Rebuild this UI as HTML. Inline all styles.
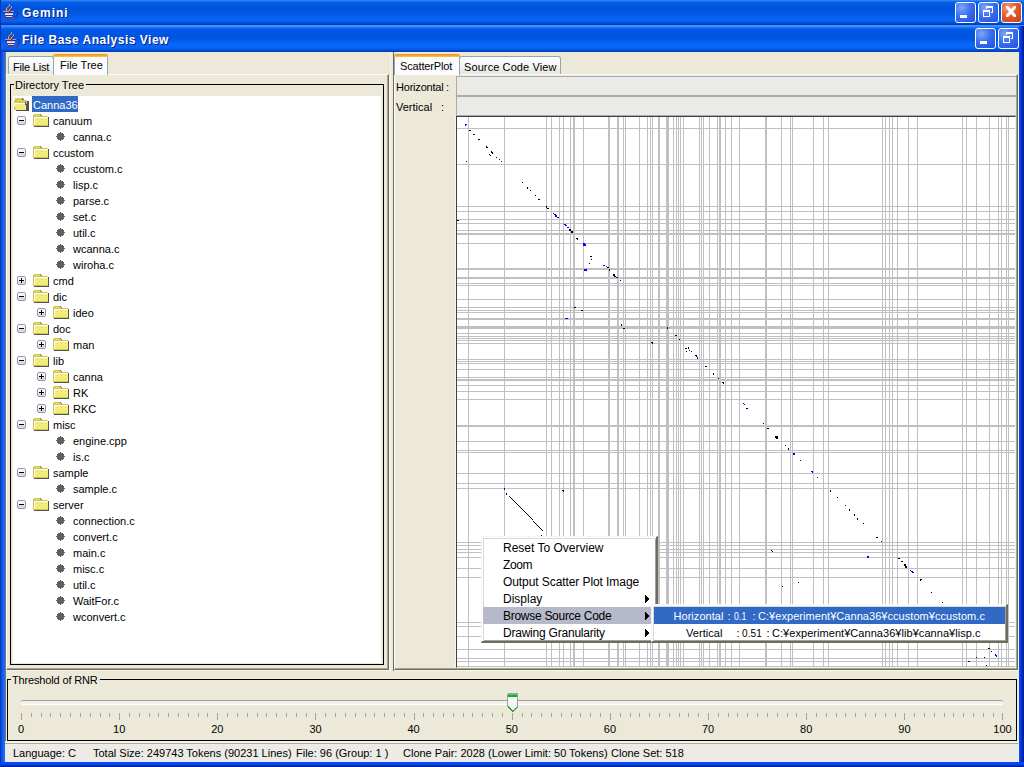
<!DOCTYPE html>
<html><head><meta charset="utf-8"><style>
*{margin:0;padding:0;box-sizing:border-box}
html,body{width:1024px;height:767px;overflow:hidden;background:#ECE9D8;font-family:"Liberation Sans",sans-serif;font-size:11px;color:#000}
.a{position:absolute}
.t{position:absolute;white-space:pre;line-height:1}
#tb1{left:0;top:0;width:1024px;height:26px;background:linear-gradient(#3C8EF5 0px,#0A60EA 2px,#0058E4 4px,#0052DC 9px,#0058E6 14px,#0864F4 19px,#0662F2 21px,#0048D0 23.5px,#0038B4 25px,#3D90F8 25px,#3D90F8 26px)}
#frame{left:0;top:26px;width:1024px;height:741px;background:#0041D3}
#tb2{left:0;top:26px;width:1024px;height:26px;background:linear-gradient(#4A98FA 0px,#1068F0 2px,#0058E6 4px,#0054DE 10px,#0058E8 14px,#0A66F8 18px,#0864F4 22px,#0050D8 24px,#003CB0 26px)}
#lb{left:0;top:52px;width:5px;height:715px;background:linear-gradient(90deg,#0020C8 0px,#0050EA 1.5px,#1A6CF8 4px,#1A6CF8 5px)}
#rb{left:1019px;top:26px;width:5px;height:741px;background:linear-gradient(90deg,#0448F8 0px,#0448F8 1px,#0234C8 2.5px,#00168A 5px)}
#bb{left:0;top:762px;width:1024px;height:5px;background:linear-gradient(#0448F8 0px,#0448F8 2px,#0234C8 3.5px,#00168A 5px)}
#content{left:5px;top:52px;width:1014px;height:710px;background:#ECE9D8}
.ttl{color:#fff;font-weight:bold;font-size:13px;text-shadow:1px 1px 0 #0A1E80}
.btn{position:absolute;width:21px;height:21px;border:1px solid #fff;border-radius:3px;background:radial-gradient(circle at 30% 25%,#7FA6FA 0,#3A6FF0 45%,#2350D8 100%)}
.cls{background:radial-gradient(circle at 30% 25%,#F09A7F 0,#E45A2C 45%,#C8401C 100%)}
.tab{position:absolute;border:1px solid #94A6B4;border-bottom:none;border-radius:3px 3px 0 0;background:linear-gradient(#FFFFFF,#F3F3EF 60%,#E6E5DE)}
.tabsel{position:absolute;border:1px solid #94A6B4;border-bottom:none;border-top:none;border-radius:3px 3px 0 0;background:#FCFCFE}
.tabsel:before{content:"";position:absolute;left:-1px;right:-1px;top:0;height:3px;background:linear-gradient(#E68B2C,#FFC73C);border-radius:3px 3px 0 0}
.pane{position:absolute;background:#ECE9D8;border-left:1px solid #FFFFFF;border-top:1px solid #FCFCFE;border-right:1px solid #6E6C5E;border-bottom:1px solid #6E6C5E;box-shadow:inset -1px -1px 0 #A8A490,1px 1px 0 #F7F5E8}
.tree{font-size:11px}
.pm{font-size:12px}
</style></head><body>
<div class="a" id="frame"></div><div class="a" id="tb1"></div><div class="a" id="tb2"></div><div class="a" id="lb"></div><div class="a" id="rb"></div><div class="a" id="bb"></div><div class="a" id="content"></div>
<div class="t ttl" style="left:22px;top:7px;font-size:12px;letter-spacing:1px">Gemini</div>
<div class="t ttl" style="left:22px;top:34px;font-size:12px;letter-spacing:0.5px">File Base Analysis View</div>
<div class="btn" style="left:955px;top:2px"></div>
<div class="btn" style="left:978px;top:2px"></div>
<div class="btn cls" style="left:1001px;top:2px"></div>
<div class="btn" style="left:975px;top:28px"></div>
<div class="btn" style="left:998px;top:28px"></div>
<svg class="a" style="left:2px;top:3px" width="18" height="18" viewBox="0 0 18 18" shape-rendering="crispEdges"><path d="M7 1h1v2H7v1H6v1H5v1H4V5h1V4h1V3h1zM4 6h1v2H4zM5 8h2v1H5zM9 3h1v2H9v1H8v2H7V6h1V5h1z" fill="#F09040"/><path d="M5 6h1v2H5zM6 7h1v1H6zM8 8h1v1H8z" fill="#C83828"/><path d="M1 8h4v1h4V8h3v1H1z" fill="#A898E8"/><path d="M1 9h11v1h-1v1H2v-1H1z" fill="#3E3070"/><path d="M3 10h8v1H3z" fill="#C0B8F8"/><path d="M3 11h8v1H3z" fill="#F0F0FF"/><path d="M3 12h8v1H3z" fill="#3E3070"/><path d="M4 13h6v1H4z" fill="#E0D8FF"/><path d="M4 14h6v1H4z" fill="#3E3070"/><path d="M13 8h2v1h1v3h-1v2h-1v1h-1v-2h1v-2h1V9h-2z" fill="#3E3070"/><path d="M0 15h2v1h11v-1h2v1h-1v1H2v-1H0z" fill="#52448A"/></svg>
<svg class="a" style="left:4px;top:31px" width="18" height="18" viewBox="0 0 18 18" shape-rendering="crispEdges"><path d="M7 1h1v2H7v1H6v1H5v1H4V5h1V4h1V3h1zM4 6h1v2H4zM5 8h2v1H5zM9 3h1v2H9v1H8v2H7V6h1V5h1z" fill="#F09040"/><path d="M5 6h1v2H5zM6 7h1v1H6zM8 8h1v1H8z" fill="#C83828"/><path d="M1 8h4v1h4V8h3v1H1z" fill="#A898E8"/><path d="M1 9h11v1h-1v1H2v-1H1z" fill="#3E3070"/><path d="M3 10h8v1H3z" fill="#C0B8F8"/><path d="M3 11h8v1H3z" fill="#F0F0FF"/><path d="M3 12h8v1H3z" fill="#3E3070"/><path d="M4 13h6v1H4z" fill="#E0D8FF"/><path d="M4 14h6v1H4z" fill="#3E3070"/><path d="M13 8h2v1h1v3h-1v2h-1v1h-1v-2h1v-2h1V9h-2z" fill="#3E3070"/><path d="M0 15h2v1h11v-1h2v1h-1v1H2v-1H0z" fill="#52448A"/></svg>
<div class="a" style="left:0;top:0;width:1px;height:767px;background:#0A34B8"></div>
<svg class="a" style="left:955px;top:2px" width="21" height="21" viewBox="0 0 21 21"><path d="M5 13h7v3h-7z" fill="#fff"/></svg>
<svg class="a" style="left:978px;top:2px" width="21" height="21" viewBox="0 0 21 21"><path d="M8 4h7v7h-2v-1h1v-4h-5v1h-1z" fill="#fff"/><path d="M5 8h7v7h-7zM6 10v4h5v-4z" fill="#fff"/></svg>
<svg class="a" style="left:1001px;top:2px" width="21" height="21" viewBox="0 0 21 21"><path d="M5 4h2l3 3l3 -3h2v2l-3 3.5l3 3.5v2h-2l-3 -3l-3 3h-2v-2l3 -3.5l-3 -3.5z" fill="#fff"/></svg>
<svg class="a" style="left:975px;top:28px" width="21" height="21" viewBox="0 0 21 21"><path d="M5 13h7v3h-7z" fill="#fff"/></svg>
<svg class="a" style="left:998px;top:28px" width="21" height="21" viewBox="0 0 21 21"><path d="M8 4h7v7h-2v-1h1v-4h-5v1h-1z" fill="#fff"/><path d="M5 8h7v7h-7zM6 10v4h5v-4z" fill="#fff"/></svg>
<div class="a" style="left:5px;top:52px;width:1px;height:691px;background:#7A7868"></div>
<div class="pane" style="left:6px;top:74px;width:383px;height:596px"></div>
<div class="tab" style="left:8px;top:56px;width:46px;height:18px"></div>
<div class="t" style="left:13px;top:62px;letter-spacing:-0.2px">File List</div>
<div class="tabsel" style="left:53px;top:54px;width:55px;height:21px"></div>
<div class="t" style="left:60px;top:60px">File Tree</div>
<div class="a" style="left:10px;top:84px;width:374px;height:581px;border:1px solid #000"></div>
<div class="a" style="left:13px;top:96px;width:368px;height:567px;background:#fff"></div>
<div class="t" style="left:14px;top:80px;background:#ECE9D8;padding:0 2px 0 1px">Directory Tree</div>
<svg class="a" style="left:13px;top:98px" width="16" height="14" viewBox="0 0 16 14" shape-rendering="crispEdges"><path d="M3 12h13v1H3z" fill="#4E4E5E"/><path d="M14 3h2v10h-2z" fill="#4E4E5E"/><path d="M2 0h6l1 1v1h5v10H1V2h1z" fill="#CFCB5A"/><path d="M0 5h12v1h1v2h1v4H3v-2H2V8H1V7H0z" fill="#F4EC78"/><path d="M1 5h11v1H2v2H1z" fill="#FFFFFF"/><path d="M12 4h1v2h1v6h-1V7h-1z" fill="#55556A"/><path d="M9 0h1v1h1v1H9z" fill="#6A6A50"/></svg>
<div class="a" style="left:32px;top:96px;width:46px;height:16px;background:#316AC5"></div>
<div class="t" style="left:33px;top:100px;color:#fff">Canna36</div>
<svg class="a" style="left:17px;top:116px" width="9" height="9" viewBox="0 0 9 9" shape-rendering="crispEdges"><path d="M1 0h7v1h1v7h-1v1H1v-1H0V1h1z" fill="#9098B0"/><path d="M1 1h7v7H1z" fill="#F4F4F4"/><path d="M1 5h7v3H1z" fill="#DADDE6"/><path d="M2 4h5v1H2z" fill="#000"/></svg>
<svg class="a" style="left:33px;top:114px" width="16" height="13" viewBox="0 0 16 13" shape-rendering="crispEdges"><path d="M1 3h15v10H1z" fill="#56564E"/><path d="M1 0h6l1 1v1h7v10H0V1z" fill="#CCC45A"/><path d="M1 3h14v8H1z" fill="#F6EE7C"/><path d="M1 3h14v1H2v7H1z" fill="#FFFFFF"/><path d="M2 1h5v1H2z" fill="#E4DC6C"/><path d="M7 0h1v1h1v1H8V1H7z" fill="#7A7450"/><path d="M4 5h1v1H4zM8 5h1v1H8zM12 5h1v1h-1zM6 7h1v1H6zM10 7h1v1h-1zM4 9h1v1H4zM8 9h1v1H8zM12 9h1v1h-1z" fill="#DCD466"/></svg>
<div class="t" style="left:53px;top:116px">canuum</div>
<svg class="a" style="left:56px;top:132px" width="9" height="9" viewBox="0 0 9 9" shape-rendering="crispEdges"><path d="M4 0h1v1h2v1h1v2h1v1H8v2H7v1H5v1H4V8H2V7H1V5H0V4h1V2h1V1h2z" fill="#606060"/></svg>
<div class="t" style="left:73px;top:132px">canna.c</div>
<svg class="a" style="left:17px;top:148px" width="9" height="9" viewBox="0 0 9 9" shape-rendering="crispEdges"><path d="M1 0h7v1h1v7h-1v1H1v-1H0V1h1z" fill="#9098B0"/><path d="M1 1h7v7H1z" fill="#F4F4F4"/><path d="M1 5h7v3H1z" fill="#DADDE6"/><path d="M2 4h5v1H2z" fill="#000"/></svg>
<svg class="a" style="left:33px;top:146px" width="16" height="13" viewBox="0 0 16 13" shape-rendering="crispEdges"><path d="M1 3h15v10H1z" fill="#56564E"/><path d="M1 0h6l1 1v1h7v10H0V1z" fill="#CCC45A"/><path d="M1 3h14v8H1z" fill="#F6EE7C"/><path d="M1 3h14v1H2v7H1z" fill="#FFFFFF"/><path d="M2 1h5v1H2z" fill="#E4DC6C"/><path d="M7 0h1v1h1v1H8V1H7z" fill="#7A7450"/><path d="M4 5h1v1H4zM8 5h1v1H8zM12 5h1v1h-1zM6 7h1v1H6zM10 7h1v1h-1zM4 9h1v1H4zM8 9h1v1H8zM12 9h1v1h-1z" fill="#DCD466"/></svg>
<div class="t" style="left:53px;top:148px">ccustom</div>
<svg class="a" style="left:56px;top:164px" width="9" height="9" viewBox="0 0 9 9" shape-rendering="crispEdges"><path d="M4 0h1v1h2v1h1v2h1v1H8v2H7v1H5v1H4V8H2V7H1V5H0V4h1V2h1V1h2z" fill="#606060"/></svg>
<div class="t" style="left:73px;top:164px">ccustom.c</div>
<svg class="a" style="left:56px;top:180px" width="9" height="9" viewBox="0 0 9 9" shape-rendering="crispEdges"><path d="M4 0h1v1h2v1h1v2h1v1H8v2H7v1H5v1H4V8H2V7H1V5H0V4h1V2h1V1h2z" fill="#606060"/></svg>
<div class="t" style="left:73px;top:180px">lisp.c</div>
<svg class="a" style="left:56px;top:196px" width="9" height="9" viewBox="0 0 9 9" shape-rendering="crispEdges"><path d="M4 0h1v1h2v1h1v2h1v1H8v2H7v1H5v1H4V8H2V7H1V5H0V4h1V2h1V1h2z" fill="#606060"/></svg>
<div class="t" style="left:73px;top:196px">parse.c</div>
<svg class="a" style="left:56px;top:212px" width="9" height="9" viewBox="0 0 9 9" shape-rendering="crispEdges"><path d="M4 0h1v1h2v1h1v2h1v1H8v2H7v1H5v1H4V8H2V7H1V5H0V4h1V2h1V1h2z" fill="#606060"/></svg>
<div class="t" style="left:73px;top:212px">set.c</div>
<svg class="a" style="left:56px;top:228px" width="9" height="9" viewBox="0 0 9 9" shape-rendering="crispEdges"><path d="M4 0h1v1h2v1h1v2h1v1H8v2H7v1H5v1H4V8H2V7H1V5H0V4h1V2h1V1h2z" fill="#606060"/></svg>
<div class="t" style="left:73px;top:228px">util.c</div>
<svg class="a" style="left:56px;top:244px" width="9" height="9" viewBox="0 0 9 9" shape-rendering="crispEdges"><path d="M4 0h1v1h2v1h1v2h1v1H8v2H7v1H5v1H4V8H2V7H1V5H0V4h1V2h1V1h2z" fill="#606060"/></svg>
<div class="t" style="left:73px;top:244px">wcanna.c</div>
<svg class="a" style="left:56px;top:260px" width="9" height="9" viewBox="0 0 9 9" shape-rendering="crispEdges"><path d="M4 0h1v1h2v1h1v2h1v1H8v2H7v1H5v1H4V8H2V7H1V5H0V4h1V2h1V1h2z" fill="#606060"/></svg>
<div class="t" style="left:73px;top:260px">wiroha.c</div>
<svg class="a" style="left:17px;top:276px" width="9" height="9" viewBox="0 0 9 9" shape-rendering="crispEdges"><path d="M1 0h7v1h1v7h-1v1H1v-1H0V1h1z" fill="#9098B0"/><path d="M1 1h7v7H1z" fill="#F4F4F4"/><path d="M1 5h7v3H1z" fill="#DADDE6"/><path d="M2 4h5v1H2z" fill="#000"/><path d="M4 2h1v5H4z" fill="#000"/></svg>
<svg class="a" style="left:33px;top:274px" width="16" height="13" viewBox="0 0 16 13" shape-rendering="crispEdges"><path d="M1 3h15v10H1z" fill="#56564E"/><path d="M1 0h6l1 1v1h7v10H0V1z" fill="#CCC45A"/><path d="M1 3h14v8H1z" fill="#F6EE7C"/><path d="M1 3h14v1H2v7H1z" fill="#FFFFFF"/><path d="M2 1h5v1H2z" fill="#E4DC6C"/><path d="M7 0h1v1h1v1H8V1H7z" fill="#7A7450"/><path d="M4 5h1v1H4zM8 5h1v1H8zM12 5h1v1h-1zM6 7h1v1H6zM10 7h1v1h-1zM4 9h1v1H4zM8 9h1v1H8zM12 9h1v1h-1z" fill="#DCD466"/></svg>
<div class="t" style="left:53px;top:276px">cmd</div>
<svg class="a" style="left:17px;top:292px" width="9" height="9" viewBox="0 0 9 9" shape-rendering="crispEdges"><path d="M1 0h7v1h1v7h-1v1H1v-1H0V1h1z" fill="#9098B0"/><path d="M1 1h7v7H1z" fill="#F4F4F4"/><path d="M1 5h7v3H1z" fill="#DADDE6"/><path d="M2 4h5v1H2z" fill="#000"/></svg>
<svg class="a" style="left:33px;top:290px" width="16" height="13" viewBox="0 0 16 13" shape-rendering="crispEdges"><path d="M1 3h15v10H1z" fill="#56564E"/><path d="M1 0h6l1 1v1h7v10H0V1z" fill="#CCC45A"/><path d="M1 3h14v8H1z" fill="#F6EE7C"/><path d="M1 3h14v1H2v7H1z" fill="#FFFFFF"/><path d="M2 1h5v1H2z" fill="#E4DC6C"/><path d="M7 0h1v1h1v1H8V1H7z" fill="#7A7450"/><path d="M4 5h1v1H4zM8 5h1v1H8zM12 5h1v1h-1zM6 7h1v1H6zM10 7h1v1h-1zM4 9h1v1H4zM8 9h1v1H8zM12 9h1v1h-1z" fill="#DCD466"/></svg>
<div class="t" style="left:53px;top:292px">dic</div>
<svg class="a" style="left:37px;top:308px" width="9" height="9" viewBox="0 0 9 9" shape-rendering="crispEdges"><path d="M1 0h7v1h1v7h-1v1H1v-1H0V1h1z" fill="#9098B0"/><path d="M1 1h7v7H1z" fill="#F4F4F4"/><path d="M1 5h7v3H1z" fill="#DADDE6"/><path d="M2 4h5v1H2z" fill="#000"/><path d="M4 2h1v5H4z" fill="#000"/></svg>
<svg class="a" style="left:53px;top:306px" width="16" height="13" viewBox="0 0 16 13" shape-rendering="crispEdges"><path d="M1 3h15v10H1z" fill="#56564E"/><path d="M1 0h6l1 1v1h7v10H0V1z" fill="#CCC45A"/><path d="M1 3h14v8H1z" fill="#F6EE7C"/><path d="M1 3h14v1H2v7H1z" fill="#FFFFFF"/><path d="M2 1h5v1H2z" fill="#E4DC6C"/><path d="M7 0h1v1h1v1H8V1H7z" fill="#7A7450"/><path d="M4 5h1v1H4zM8 5h1v1H8zM12 5h1v1h-1zM6 7h1v1H6zM10 7h1v1h-1zM4 9h1v1H4zM8 9h1v1H8zM12 9h1v1h-1z" fill="#DCD466"/></svg>
<div class="t" style="left:73px;top:308px">ideo</div>
<svg class="a" style="left:17px;top:324px" width="9" height="9" viewBox="0 0 9 9" shape-rendering="crispEdges"><path d="M1 0h7v1h1v7h-1v1H1v-1H0V1h1z" fill="#9098B0"/><path d="M1 1h7v7H1z" fill="#F4F4F4"/><path d="M1 5h7v3H1z" fill="#DADDE6"/><path d="M2 4h5v1H2z" fill="#000"/></svg>
<svg class="a" style="left:33px;top:322px" width="16" height="13" viewBox="0 0 16 13" shape-rendering="crispEdges"><path d="M1 3h15v10H1z" fill="#56564E"/><path d="M1 0h6l1 1v1h7v10H0V1z" fill="#CCC45A"/><path d="M1 3h14v8H1z" fill="#F6EE7C"/><path d="M1 3h14v1H2v7H1z" fill="#FFFFFF"/><path d="M2 1h5v1H2z" fill="#E4DC6C"/><path d="M7 0h1v1h1v1H8V1H7z" fill="#7A7450"/><path d="M4 5h1v1H4zM8 5h1v1H8zM12 5h1v1h-1zM6 7h1v1H6zM10 7h1v1h-1zM4 9h1v1H4zM8 9h1v1H8zM12 9h1v1h-1z" fill="#DCD466"/></svg>
<div class="t" style="left:53px;top:324px">doc</div>
<svg class="a" style="left:37px;top:340px" width="9" height="9" viewBox="0 0 9 9" shape-rendering="crispEdges"><path d="M1 0h7v1h1v7h-1v1H1v-1H0V1h1z" fill="#9098B0"/><path d="M1 1h7v7H1z" fill="#F4F4F4"/><path d="M1 5h7v3H1z" fill="#DADDE6"/><path d="M2 4h5v1H2z" fill="#000"/><path d="M4 2h1v5H4z" fill="#000"/></svg>
<svg class="a" style="left:53px;top:338px" width="16" height="13" viewBox="0 0 16 13" shape-rendering="crispEdges"><path d="M1 3h15v10H1z" fill="#56564E"/><path d="M1 0h6l1 1v1h7v10H0V1z" fill="#CCC45A"/><path d="M1 3h14v8H1z" fill="#F6EE7C"/><path d="M1 3h14v1H2v7H1z" fill="#FFFFFF"/><path d="M2 1h5v1H2z" fill="#E4DC6C"/><path d="M7 0h1v1h1v1H8V1H7z" fill="#7A7450"/><path d="M4 5h1v1H4zM8 5h1v1H8zM12 5h1v1h-1zM6 7h1v1H6zM10 7h1v1h-1zM4 9h1v1H4zM8 9h1v1H8zM12 9h1v1h-1z" fill="#DCD466"/></svg>
<div class="t" style="left:73px;top:340px">man</div>
<svg class="a" style="left:17px;top:356px" width="9" height="9" viewBox="0 0 9 9" shape-rendering="crispEdges"><path d="M1 0h7v1h1v7h-1v1H1v-1H0V1h1z" fill="#9098B0"/><path d="M1 1h7v7H1z" fill="#F4F4F4"/><path d="M1 5h7v3H1z" fill="#DADDE6"/><path d="M2 4h5v1H2z" fill="#000"/></svg>
<svg class="a" style="left:33px;top:354px" width="16" height="13" viewBox="0 0 16 13" shape-rendering="crispEdges"><path d="M1 3h15v10H1z" fill="#56564E"/><path d="M1 0h6l1 1v1h7v10H0V1z" fill="#CCC45A"/><path d="M1 3h14v8H1z" fill="#F6EE7C"/><path d="M1 3h14v1H2v7H1z" fill="#FFFFFF"/><path d="M2 1h5v1H2z" fill="#E4DC6C"/><path d="M7 0h1v1h1v1H8V1H7z" fill="#7A7450"/><path d="M4 5h1v1H4zM8 5h1v1H8zM12 5h1v1h-1zM6 7h1v1H6zM10 7h1v1h-1zM4 9h1v1H4zM8 9h1v1H8zM12 9h1v1h-1z" fill="#DCD466"/></svg>
<div class="t" style="left:53px;top:356px">lib</div>
<svg class="a" style="left:37px;top:372px" width="9" height="9" viewBox="0 0 9 9" shape-rendering="crispEdges"><path d="M1 0h7v1h1v7h-1v1H1v-1H0V1h1z" fill="#9098B0"/><path d="M1 1h7v7H1z" fill="#F4F4F4"/><path d="M1 5h7v3H1z" fill="#DADDE6"/><path d="M2 4h5v1H2z" fill="#000"/><path d="M4 2h1v5H4z" fill="#000"/></svg>
<svg class="a" style="left:53px;top:370px" width="16" height="13" viewBox="0 0 16 13" shape-rendering="crispEdges"><path d="M1 3h15v10H1z" fill="#56564E"/><path d="M1 0h6l1 1v1h7v10H0V1z" fill="#CCC45A"/><path d="M1 3h14v8H1z" fill="#F6EE7C"/><path d="M1 3h14v1H2v7H1z" fill="#FFFFFF"/><path d="M2 1h5v1H2z" fill="#E4DC6C"/><path d="M7 0h1v1h1v1H8V1H7z" fill="#7A7450"/><path d="M4 5h1v1H4zM8 5h1v1H8zM12 5h1v1h-1zM6 7h1v1H6zM10 7h1v1h-1zM4 9h1v1H4zM8 9h1v1H8zM12 9h1v1h-1z" fill="#DCD466"/></svg>
<div class="t" style="left:73px;top:372px">canna</div>
<svg class="a" style="left:37px;top:388px" width="9" height="9" viewBox="0 0 9 9" shape-rendering="crispEdges"><path d="M1 0h7v1h1v7h-1v1H1v-1H0V1h1z" fill="#9098B0"/><path d="M1 1h7v7H1z" fill="#F4F4F4"/><path d="M1 5h7v3H1z" fill="#DADDE6"/><path d="M2 4h5v1H2z" fill="#000"/><path d="M4 2h1v5H4z" fill="#000"/></svg>
<svg class="a" style="left:53px;top:386px" width="16" height="13" viewBox="0 0 16 13" shape-rendering="crispEdges"><path d="M1 3h15v10H1z" fill="#56564E"/><path d="M1 0h6l1 1v1h7v10H0V1z" fill="#CCC45A"/><path d="M1 3h14v8H1z" fill="#F6EE7C"/><path d="M1 3h14v1H2v7H1z" fill="#FFFFFF"/><path d="M2 1h5v1H2z" fill="#E4DC6C"/><path d="M7 0h1v1h1v1H8V1H7z" fill="#7A7450"/><path d="M4 5h1v1H4zM8 5h1v1H8zM12 5h1v1h-1zM6 7h1v1H6zM10 7h1v1h-1zM4 9h1v1H4zM8 9h1v1H8zM12 9h1v1h-1z" fill="#DCD466"/></svg>
<div class="t" style="left:73px;top:388px">RK</div>
<svg class="a" style="left:37px;top:404px" width="9" height="9" viewBox="0 0 9 9" shape-rendering="crispEdges"><path d="M1 0h7v1h1v7h-1v1H1v-1H0V1h1z" fill="#9098B0"/><path d="M1 1h7v7H1z" fill="#F4F4F4"/><path d="M1 5h7v3H1z" fill="#DADDE6"/><path d="M2 4h5v1H2z" fill="#000"/><path d="M4 2h1v5H4z" fill="#000"/></svg>
<svg class="a" style="left:53px;top:402px" width="16" height="13" viewBox="0 0 16 13" shape-rendering="crispEdges"><path d="M1 3h15v10H1z" fill="#56564E"/><path d="M1 0h6l1 1v1h7v10H0V1z" fill="#CCC45A"/><path d="M1 3h14v8H1z" fill="#F6EE7C"/><path d="M1 3h14v1H2v7H1z" fill="#FFFFFF"/><path d="M2 1h5v1H2z" fill="#E4DC6C"/><path d="M7 0h1v1h1v1H8V1H7z" fill="#7A7450"/><path d="M4 5h1v1H4zM8 5h1v1H8zM12 5h1v1h-1zM6 7h1v1H6zM10 7h1v1h-1zM4 9h1v1H4zM8 9h1v1H8zM12 9h1v1h-1z" fill="#DCD466"/></svg>
<div class="t" style="left:73px;top:404px">RKC</div>
<svg class="a" style="left:17px;top:420px" width="9" height="9" viewBox="0 0 9 9" shape-rendering="crispEdges"><path d="M1 0h7v1h1v7h-1v1H1v-1H0V1h1z" fill="#9098B0"/><path d="M1 1h7v7H1z" fill="#F4F4F4"/><path d="M1 5h7v3H1z" fill="#DADDE6"/><path d="M2 4h5v1H2z" fill="#000"/></svg>
<svg class="a" style="left:33px;top:418px" width="16" height="13" viewBox="0 0 16 13" shape-rendering="crispEdges"><path d="M1 3h15v10H1z" fill="#56564E"/><path d="M1 0h6l1 1v1h7v10H0V1z" fill="#CCC45A"/><path d="M1 3h14v8H1z" fill="#F6EE7C"/><path d="M1 3h14v1H2v7H1z" fill="#FFFFFF"/><path d="M2 1h5v1H2z" fill="#E4DC6C"/><path d="M7 0h1v1h1v1H8V1H7z" fill="#7A7450"/><path d="M4 5h1v1H4zM8 5h1v1H8zM12 5h1v1h-1zM6 7h1v1H6zM10 7h1v1h-1zM4 9h1v1H4zM8 9h1v1H8zM12 9h1v1h-1z" fill="#DCD466"/></svg>
<div class="t" style="left:53px;top:420px">misc</div>
<svg class="a" style="left:56px;top:436px" width="9" height="9" viewBox="0 0 9 9" shape-rendering="crispEdges"><path d="M4 0h1v1h2v1h1v2h1v1H8v2H7v1H5v1H4V8H2V7H1V5H0V4h1V2h1V1h2z" fill="#606060"/></svg>
<div class="t" style="left:73px;top:436px">engine.cpp</div>
<svg class="a" style="left:56px;top:452px" width="9" height="9" viewBox="0 0 9 9" shape-rendering="crispEdges"><path d="M4 0h1v1h2v1h1v2h1v1H8v2H7v1H5v1H4V8H2V7H1V5H0V4h1V2h1V1h2z" fill="#606060"/></svg>
<div class="t" style="left:73px;top:452px">is.c</div>
<svg class="a" style="left:17px;top:468px" width="9" height="9" viewBox="0 0 9 9" shape-rendering="crispEdges"><path d="M1 0h7v1h1v7h-1v1H1v-1H0V1h1z" fill="#9098B0"/><path d="M1 1h7v7H1z" fill="#F4F4F4"/><path d="M1 5h7v3H1z" fill="#DADDE6"/><path d="M2 4h5v1H2z" fill="#000"/></svg>
<svg class="a" style="left:33px;top:466px" width="16" height="13" viewBox="0 0 16 13" shape-rendering="crispEdges"><path d="M1 3h15v10H1z" fill="#56564E"/><path d="M1 0h6l1 1v1h7v10H0V1z" fill="#CCC45A"/><path d="M1 3h14v8H1z" fill="#F6EE7C"/><path d="M1 3h14v1H2v7H1z" fill="#FFFFFF"/><path d="M2 1h5v1H2z" fill="#E4DC6C"/><path d="M7 0h1v1h1v1H8V1H7z" fill="#7A7450"/><path d="M4 5h1v1H4zM8 5h1v1H8zM12 5h1v1h-1zM6 7h1v1H6zM10 7h1v1h-1zM4 9h1v1H4zM8 9h1v1H8zM12 9h1v1h-1z" fill="#DCD466"/></svg>
<div class="t" style="left:53px;top:468px">sample</div>
<svg class="a" style="left:56px;top:484px" width="9" height="9" viewBox="0 0 9 9" shape-rendering="crispEdges"><path d="M4 0h1v1h2v1h1v2h1v1H8v2H7v1H5v1H4V8H2V7H1V5H0V4h1V2h1V1h2z" fill="#606060"/></svg>
<div class="t" style="left:73px;top:484px">sample.c</div>
<svg class="a" style="left:17px;top:500px" width="9" height="9" viewBox="0 0 9 9" shape-rendering="crispEdges"><path d="M1 0h7v1h1v7h-1v1H1v-1H0V1h1z" fill="#9098B0"/><path d="M1 1h7v7H1z" fill="#F4F4F4"/><path d="M1 5h7v3H1z" fill="#DADDE6"/><path d="M2 4h5v1H2z" fill="#000"/></svg>
<svg class="a" style="left:33px;top:498px" width="16" height="13" viewBox="0 0 16 13" shape-rendering="crispEdges"><path d="M1 3h15v10H1z" fill="#56564E"/><path d="M1 0h6l1 1v1h7v10H0V1z" fill="#CCC45A"/><path d="M1 3h14v8H1z" fill="#F6EE7C"/><path d="M1 3h14v1H2v7H1z" fill="#FFFFFF"/><path d="M2 1h5v1H2z" fill="#E4DC6C"/><path d="M7 0h1v1h1v1H8V1H7z" fill="#7A7450"/><path d="M4 5h1v1H4zM8 5h1v1H8zM12 5h1v1h-1zM6 7h1v1H6zM10 7h1v1h-1zM4 9h1v1H4zM8 9h1v1H8zM12 9h1v1h-1z" fill="#DCD466"/></svg>
<div class="t" style="left:53px;top:500px">server</div>
<svg class="a" style="left:56px;top:516px" width="9" height="9" viewBox="0 0 9 9" shape-rendering="crispEdges"><path d="M4 0h1v1h2v1h1v2h1v1H8v2H7v1H5v1H4V8H2V7H1V5H0V4h1V2h1V1h2z" fill="#606060"/></svg>
<div class="t" style="left:73px;top:516px">connection.c</div>
<svg class="a" style="left:56px;top:532px" width="9" height="9" viewBox="0 0 9 9" shape-rendering="crispEdges"><path d="M4 0h1v1h2v1h1v2h1v1H8v2H7v1H5v1H4V8H2V7H1V5H0V4h1V2h1V1h2z" fill="#606060"/></svg>
<div class="t" style="left:73px;top:532px">convert.c</div>
<svg class="a" style="left:56px;top:548px" width="9" height="9" viewBox="0 0 9 9" shape-rendering="crispEdges"><path d="M4 0h1v1h2v1h1v2h1v1H8v2H7v1H5v1H4V8H2V7H1V5H0V4h1V2h1V1h2z" fill="#606060"/></svg>
<div class="t" style="left:73px;top:548px">main.c</div>
<svg class="a" style="left:56px;top:564px" width="9" height="9" viewBox="0 0 9 9" shape-rendering="crispEdges"><path d="M4 0h1v1h2v1h1v2h1v1H8v2H7v1H5v1H4V8H2V7H1V5H0V4h1V2h1V1h2z" fill="#606060"/></svg>
<div class="t" style="left:73px;top:564px">misc.c</div>
<svg class="a" style="left:56px;top:580px" width="9" height="9" viewBox="0 0 9 9" shape-rendering="crispEdges"><path d="M4 0h1v1h2v1h1v2h1v1H8v2H7v1H5v1H4V8H2V7H1V5H0V4h1V2h1V1h2z" fill="#606060"/></svg>
<div class="t" style="left:73px;top:580px">util.c</div>
<svg class="a" style="left:56px;top:596px" width="9" height="9" viewBox="0 0 9 9" shape-rendering="crispEdges"><path d="M4 0h1v1h2v1h1v2h1v1H8v2H7v1H5v1H4V8H2V7H1V5H0V4h1V2h1V1h2z" fill="#606060"/></svg>
<div class="t" style="left:73px;top:596px">WaitFor.c</div>
<svg class="a" style="left:56px;top:612px" width="9" height="9" viewBox="0 0 9 9" shape-rendering="crispEdges"><path d="M4 0h1v1h2v1h1v2h1v1H8v2H7v1H5v1H4V8H2V7H1V5H0V4h1V2h1V1h2z" fill="#606060"/></svg>
<div class="t" style="left:73px;top:612px">wconvert.c</div>
<div class="a" style="left:390px;top:52px;width:4px;height:619px;background:#ECE9D8;border-left:1px solid #F8F4E4;border-right:1px solid #6E6C5E"></div>
<div class="pane" style="left:394px;top:74px;width:624px;height:596px"></div>
<div class="tabsel" style="left:394px;top:54px;width:66px;height:21px"></div>
<div class="t" style="left:400px;top:61px;letter-spacing:-0.15px">ScatterPlot</div>
<div class="tab" style="left:459px;top:56px;width:102px;height:18px"></div>
<div class="t" style="left:464px;top:62px;letter-spacing:0.1px">Source Code View</div>
<div class="t" style="left:396px;top:82px;letter-spacing:-0.2px">Horizontal</div><div class="t" style="left:446px;top:82px">:</div>
<div class="t" style="left:396px;top:102px">Vertical</div><div class="t" style="left:441px;top:102px">:</div>
<div class="a" style="left:456px;top:76px;width:560px;height:20px;background:#EBEAE4;border:1px solid #A5ADB5;border-right:none"></div>
<div class="a" style="left:456px;top:96px;width:560px;height:20px;background:#EBEAE4;border:1px solid #A5ADB5;border-right:none"></div>
<div class="a" style="left:456px;top:116px;width:560px;height:552px;background:#fff;border-top:1px solid #404040;border-left:1px solid #404040;border-right:1px solid #F5F3E6;border-bottom:1px solid #F5F3E6;box-shadow:-1px 0 0 #F8F4E4"></div>
<svg class="a" style="left:457px;top:117px" width="558" height="550" viewBox="0 0 558 550" shape-rendering="crispEdges"><path d="M11 0h1v550h-1zM0 11h558v1H0zM47 0h1v550h-1zM0 47h558v1H0zM89 0h1v550h-1zM0 89h558v1H0zM94 0h1v550h-1zM0 94h558v1H0zM102 0h1v550h-1zM0 102h558v1H0zM106 0h1v550h-1zM0 106h558v1H0zM113 0h1v550h-1zM0 113h558v1H0zM116 0h1v550h-1zM0 116h558v1H0zM117 0h1v550h-1zM0 117h558v1H0zM126 0h1v550h-1zM0 126h558v1H0zM151 0h1v550h-1zM0 151h558v1H0zM152 0h1v550h-1zM0 152h558v1H0zM160 0h1v550h-1zM0 160h558v1H0zM161 0h1v550h-1zM0 161h558v1H0zM166 0h1v550h-1zM0 166h558v1H0zM168 0h1v550h-1zM0 168h558v1H0zM182 0h1v550h-1zM0 182h558v1H0zM190 0h1v550h-1zM0 190h558v1H0zM193 0h1v550h-1zM0 193h558v1H0zM195 0h1v550h-1zM0 195h558v1H0zM201 0h1v550h-1zM0 201h558v1H0zM202 0h1v550h-1zM0 202h558v1H0zM209 0h1v550h-1zM0 209h558v1H0zM210 0h1v550h-1zM0 210h558v1H0zM211 0h1v550h-1zM0 211h558v1H0zM216 0h1v550h-1zM0 216h558v1H0zM219 0h1v550h-1zM0 219h558v1H0zM221 0h1v550h-1zM0 221h558v1H0zM223 0h1v550h-1zM0 223h558v1H0zM226 0h1v550h-1zM0 226h558v1H0zM242 0h1v550h-1zM0 242h558v1H0zM244 0h1v550h-1zM0 244h558v1H0zM246 0h1v550h-1zM0 246h558v1H0zM252 0h1v550h-1zM0 252h558v1H0zM260 0h1v550h-1zM0 260h558v1H0zM262 0h1v550h-1zM0 262h558v1H0zM263 0h1v550h-1zM0 263h558v1H0zM268 0h1v550h-1zM0 268h558v1H0zM274 0h1v550h-1zM0 274h558v1H0zM282 0h1v550h-1zM0 282h558v1H0zM308 0h1v550h-1zM0 308h558v1H0zM309 0h1v550h-1zM0 309h558v1H0zM324 0h1v550h-1zM0 324h558v1H0zM333 0h1v550h-1zM0 333h558v1H0zM335 0h1v550h-1zM0 335h558v1H0zM356 0h1v550h-1zM0 356h558v1H0zM366 0h1v550h-1zM0 366h558v1H0zM371 0h1v550h-1zM0 371h558v1H0zM425 0h1v550h-1zM0 425h558v1H0zM428 0h1v550h-1zM0 428h558v1H0zM432 0h1v550h-1zM0 432h558v1H0zM435 0h1v550h-1zM0 435h558v1H0zM440 0h1v550h-1zM0 440h558v1H0zM451 0h1v550h-1zM0 451h558v1H0zM460 0h1v550h-1zM0 460h558v1H0zM505 0h1v550h-1zM0 505h558v1H0zM509 0h1v550h-1zM0 509h558v1H0zM519 0h1v550h-1zM0 519h558v1H0zM532 0h1v550h-1zM0 532h558v1H0zM541 0h1v550h-1zM0 541h558v1H0zM544 0h1v550h-1zM0 544h558v1H0zM549 0h1v550h-1zM0 549h558v1H0zM551 0h1v550h-1z" fill="#C0C0C0"/><path d="M12 13h2v1h-2zM16 17h1v1h-1zM21 22h2v1h-2zM29 29h1v2h-1zM30 30h1v1h-1zM34 34h1v2h-1zM35 35h1v2h-1zM32 37h1v1h-1zM33 38h1v1h-1zM39 40h1v1h-1zM65 65h1v1h-1zM70 70h1v2h-1zM73 73h1v1h-1zM78 78h1v1h-1zM81 82h2v1h-2zM89 89h1v2h-1zM90 91h2v1h-2zM100 100h2v1h-2zM112 112h2v2h-2zM114 114h2v2h-2zM119 121h2v1h-2zM120 122h1v1h-1zM133 139h2v1h-2zM134 142h1v1h-1zM132 146h1v1h-1zM150 150h2v1h-2zM152 152h1v2h-1zM156 157h2v2h-2zM157 159h2v1h-2zM163 163h1v1h-1zM117 190h2v1h-2zM124 193h2v1h-2zM164 207h1v2h-1zM166 211h2v1h-2zM210 210h1v2h-1zM218 218h2v1h-2zM222 222h1v1h-1zM194 225h2v1h-2zM195 226h1v1h-1zM228 231h2v1h-2zM231 230h1v2h-1zM232 233h1v1h-1zM234 234h1v1h-1zM229 234h1v1h-1zM238 238h2v1h-2zM239 239h1v1h-1zM248 249h2v1h-2zM256 256h1v2h-1zM265 265h2v1h-2zM266 266h1v1h-1zM289 291h2v1h-2zM306 306h1v1h-1zM310 311h2v1h-2zM318 319h3v2h-3zM319 321h2v1h-2zM328 328h1v1h-1zM331 331h1v2h-1zM373 373h1v2h-1zM380 380h1v1h-1zM392 392h1v2h-1zM397 397h1v2h-1zM400 401h1v2h-1zM406 406h1v1h-1zM419 420h2v1h-2zM441 441h2v1h-2zM444 444h2v1h-2zM447 447h2v2h-2zM448 449h2v2h-2zM449 450h1v1h-1zM463 462h2v1h-2zM463 463h1v1h-1zM474 475h1v1h-1zM485 485h1v1h-1zM531 531h2v1h-2zM534 534h1v1h-1zM519 540h1v1h-1zM527 540h1v1h-1zM511 544h2v1h-2zM529 548h1v1h-1zM49 376h1v2h-1zM105 373h2v1h-2zM106 374h1v1h-1zM84 418h1v1h-1zM314 433h1v1h-1zM315 434h1v1h-1zM325 469h1v1h-1zM341 465h1v1h-1zM0 103h2v1h-2zM53 380h1v1h-1zM54 381h1v1h-1zM55 382h1v1h-1zM56 383h1v1h-1zM57 384h1v1h-1zM58 385h1v1h-1zM59 386h1v1h-1zM60 387h1v1h-1zM61 388h1v1h-1zM62 389h1v1h-1zM63 390h1v1h-1zM64 391h1v1h-1zM65 392h1v1h-1zM66 393h1v1h-1zM67 394h1v1h-1zM68 395h1v1h-1zM69 396h1v1h-1zM70 397h1v1h-1zM71 398h1v1h-1zM72 399h1v1h-1zM73 400h1v1h-1zM74 401h1v1h-1zM75 402h1v1h-1zM76 404h1v1h-1zM77 405h1v1h-1zM78 406h1v1h-1zM79 407h1v1h-1zM80 408h1v1h-1zM81 409h1v1h-1zM82 410h1v1h-1zM83 411h1v1h-1zM84 412h1v1h-1zM85 413h1v1h-1z" fill="#000"/><path d="M8 7h2v1h-2zM8 8h1v1h-1zM17 17h1v1h-1zM42 42h1v1h-1zM44 44h1v1h-1zM9 44h1v1h-1zM44 44h1v1h-1zM96 96h1v1h-1zM97 97h2v1h-2zM98 98h2v2h-2zM107 107h2v1h-2zM108 108h2v1h-2zM110 110h2v1h-2zM126 126h2v1h-2zM126 127h3v2h-3zM127 152h3v2h-3zM146 148h2v1h-2zM149 149h1v1h-1zM159 160h2v1h-2zM108 201h3v1h-3zM240 240h1v2h-1zM261 261h1v1h-1zM286 286h1v1h-1zM287 287h1v1h-1zM336 336h2v2h-2zM343 343h1v1h-1zM354 354h2v1h-2zM355 355h1v1h-1zM360 360h1v1h-1zM388 388h1v1h-1zM424 424h1v1h-1zM410 439h2v2h-2zM453 453h1v1h-1zM454 454h2v1h-2zM455 455h2v1h-2zM538 537h1v1h-1zM538 538h2v1h-2zM539 539h1v1h-1zM47 371h1v2h-1zM52 379h1v1h-1z" fill="#0000FF"/></svg>
<div class="a" style="left:7px;top:679px;width:1010px;height:62px;border:1px solid #000"></div>
<div class="t" style="left:11px;top:675px;background:#ECE9D8;padding:0 2px 0 1px;letter-spacing:-0.15px">Threshold of RNR</div>
<div class="a" style="left:21px;top:700px;width:982px;height:5px;background:#F3F2EC;border-top:1px solid #9D9C99;border-bottom:1px solid #FFFFFF;border-radius:2px"></div>
<div class="a" style="left:481px;top:536px;width:177px;height:107px;background:#fff;border-left:1px solid #F8F6EA;border-top:1px solid #F8F6EA;border-right:2px solid #6E6C60;border-bottom:2px solid #6E6C60;box-shadow:inset 1px 1px 0 #fff,inset 2px 2px 0 #D4D8E4,inset -1px -1px 0 #A0A09A"></div>
<div class="a" style="left:483px;top:607px;width:171px;height:17px;background:#B6B9CA"></div>
<div class="t pm" style="left:503px;top:542px;letter-spacing:0px">Reset To Overview</div>
<div class="t pm" style="left:503px;top:559px;letter-spacing:-0.4px">Zoom</div>
<div class="t pm" style="left:503px;top:576px;letter-spacing:-0.08px">Output Scatter Plot Image</div>
<div class="t pm" style="left:503px;top:593px;letter-spacing:0px">Display</div>
<div class="t pm" style="left:503px;top:610px;letter-spacing:-0.28px">Browse Source Code</div>
<div class="t pm" style="left:503px;top:627px;letter-spacing:-0.22px">Drawing Granularity</div>
<svg class="a" style="left:645px;top:595px" width="5" height="8" viewBox="0 0 5 8" shape-rendering="crispEdges"><path d="M0 0h1v1h1v1h1v1h1v2h-1v1h-1v1h-1v1h-1z" fill="#000"/></svg>
<svg class="a" style="left:645px;top:612px" width="5" height="8" viewBox="0 0 5 8" shape-rendering="crispEdges"><path d="M0 0h1v1h1v1h1v1h1v2h-1v1h-1v1h-1v1h-1z" fill="#000"/></svg>
<svg class="a" style="left:645px;top:629px" width="5" height="8" viewBox="0 0 5 8" shape-rendering="crispEdges"><path d="M0 0h1v1h1v1h1v1h1v2h-1v1h-1v1h-1v1h-1z" fill="#000"/></svg>
<div class="a" style="left:651px;top:604px;width:357px;height:39px;background:#fff;border-left:1px solid #F8F6EA;border-top:1px solid #F8F6EA;border-right:2px solid #6E6C60;border-bottom:2px solid #6E6C60;box-shadow:inset 1px 1px 0 #fff,inset 2px 2px 0 #D4D8E4,inset -1px -1px 0 #A0A09A"></div>
<div class="a" style="left:654px;top:607px;width:351px;height:17px;background:#316AC5"></div>
<div class="t" style="left:673.5px;top:611px;color:#fff;letter-spacing:0.05px;transform:scaleX(1);transform-origin:0 0">Horizontal</div>
<div class="t" style="left:727.5px;top:611px;color:#fff;letter-spacing:0.05px;transform:scaleX(1);transform-origin:0 0">:</div>
<div class="t" style="left:734px;top:611px;color:#fff;letter-spacing:0.05px;transform:scaleX(0.8);transform-origin:0 0">0.1</div>
<div class="t" style="left:752.5px;top:611px;color:#fff;letter-spacing:0.05px;transform:scaleX(1);transform-origin:0 0">:</div>
<div class="t" style="left:758px;top:611px;color:#fff;letter-spacing:0.05px;transform:scaleX(1);transform-origin:0 0">C:¥experiment¥Canna36¥ccustom¥ccustom.c</div>
<div class="t" style="left:686px;top:628px;letter-spacing:0.05px;transform:scaleX(1);transform-origin:0 0">Vertical</div>
<div class="t" style="left:736.5px;top:628px;letter-spacing:0.05px;transform:scaleX(1);transform-origin:0 0">:</div>
<div class="t" style="left:742px;top:628px;letter-spacing:0.05px;transform:scaleX(0.92);transform-origin:0 0">0.51</div>
<div class="t" style="left:766.5px;top:628px;letter-spacing:0.05px;transform:scaleX(1);transform-origin:0 0">:</div>
<div class="t" style="left:772px;top:628px;letter-spacing:0.05px;transform:scaleX(1);transform-origin:0 0">C:¥experiment¥Canna36¥lib¥canna¥lisp.c</div>
<svg class="a" style="left:0;top:0" width="1024" height="767" shape-rendering="crispEdges"><path d="M21 713h1v7h-1zM31 713h1v4h-1zM41 713h1v4h-1zM50 713h1v4h-1zM60 713h1v4h-1zM70 713h1v4h-1zM80 713h1v4h-1zM90 713h1v4h-1zM100 713h1v4h-1zM109 713h1v4h-1zM119 713h1v7h-1zM129 713h1v4h-1zM139 713h1v4h-1zM149 713h1v4h-1zM158 713h1v4h-1zM168 713h1v4h-1zM178 713h1v4h-1zM188 713h1v4h-1zM198 713h1v4h-1zM207 713h1v4h-1zM217 713h1v7h-1zM227 713h1v4h-1zM237 713h1v4h-1zM247 713h1v4h-1zM257 713h1v4h-1zM266 713h1v4h-1zM276 713h1v4h-1zM286 713h1v4h-1zM296 713h1v4h-1zM306 713h1v4h-1zM315 713h1v7h-1zM325 713h1v4h-1zM335 713h1v4h-1zM345 713h1v4h-1zM355 713h1v4h-1zM365 713h1v4h-1zM374 713h1v4h-1zM384 713h1v4h-1zM394 713h1v4h-1zM404 713h1v4h-1zM414 713h1v7h-1zM423 713h1v4h-1zM433 713h1v4h-1zM443 713h1v4h-1zM453 713h1v4h-1zM463 713h1v4h-1zM472 713h1v4h-1zM482 713h1v4h-1zM492 713h1v4h-1zM502 713h1v4h-1zM512 713h1v7h-1zM522 713h1v4h-1zM531 713h1v4h-1zM541 713h1v4h-1zM551 713h1v4h-1zM561 713h1v4h-1zM571 713h1v4h-1zM580 713h1v4h-1zM590 713h1v4h-1zM600 713h1v4h-1zM610 713h1v7h-1zM620 713h1v4h-1zM630 713h1v4h-1zM639 713h1v4h-1zM649 713h1v4h-1zM659 713h1v4h-1zM669 713h1v4h-1zM679 713h1v4h-1zM688 713h1v4h-1zM698 713h1v4h-1zM708 713h1v7h-1zM718 713h1v4h-1zM728 713h1v4h-1zM737 713h1v4h-1zM747 713h1v4h-1zM757 713h1v4h-1zM767 713h1v4h-1zM777 713h1v4h-1zM787 713h1v4h-1zM796 713h1v4h-1zM806 713h1v7h-1zM816 713h1v4h-1zM826 713h1v4h-1zM836 713h1v4h-1zM845 713h1v4h-1zM855 713h1v4h-1zM865 713h1v4h-1zM875 713h1v4h-1zM885 713h1v4h-1zM895 713h1v4h-1zM904 713h1v7h-1zM914 713h1v4h-1zM924 713h1v4h-1zM934 713h1v4h-1zM944 713h1v4h-1zM953 713h1v4h-1zM963 713h1v4h-1zM973 713h1v4h-1zM983 713h1v4h-1zM993 713h1v4h-1zM1002 713h1v7h-1z" fill="#A4A49C"/></svg>
<div class="t" style="left:-9.0px;top:724px;width:60px;text-align:center">0</div>
<div class="t" style="left:89.2px;top:724px;width:60px;text-align:center">10</div>
<div class="t" style="left:187.3px;top:724px;width:60px;text-align:center">20</div>
<div class="t" style="left:285.5px;top:724px;width:60px;text-align:center">30</div>
<div class="t" style="left:383.6px;top:724px;width:60px;text-align:center">40</div>
<div class="t" style="left:481.8px;top:724px;width:60px;text-align:center">50</div>
<div class="t" style="left:579.9px;top:724px;width:60px;text-align:center">60</div>
<div class="t" style="left:678.1px;top:724px;width:60px;text-align:center">70</div>
<div class="t" style="left:776.2px;top:724px;width:60px;text-align:center">80</div>
<div class="t" style="left:874.4px;top:724px;width:60px;text-align:center">90</div>
<div class="t" style="left:972.5px;top:724px;width:60px;text-align:center">100</div>
<svg class="a" style="left:507px;top:693px" width="11" height="20" viewBox="0 0 11 20" shape-rendering="crispEdges"><path d="M1 0h9l1 1v13l-5 5h-1l-5 -5V1z" fill="#8CA0B8"/><path d="M1 1h9v13l-4.5 4.5l-4.5 -4.5z" fill="#F4F4F0"/><path d="M1 1h9v3H1z" fill="#21A621"/><path d="M1 1h9v1H1z" fill="#5CD05C"/><path d="M1 13l4.5 4.5l4.5 -4.5v1.5l-4.5 4.5l-4.5 -4.5z" fill="#21A621"/></svg>
<div class="a" style="left:5px;top:741px;width:1014px;height:2px;background:#F8F4E4"></div>
<div class="a" style="left:5px;top:743px;width:1014px;height:19px;background:#ECEBE5;border-top:1px solid #A8ACB0;border-right:1px solid #F8F4E4"></div>
<div class="t" style="left:13px;top:748px">Language: C</div>
<div class="t" style="left:93px;top:748px">Total Size: 249743 Tokens (90231 Lines)</div>
<div class="t" style="left:296px;top:748px">File: 96 (Group: 1 )</div>
<div class="t" style="left:403px;top:748px">Clone Pair: 2028 (Lower Limit: 50 Tokens)</div>
<div class="t" style="left:611px;top:748px">Clone Set: 518</div>
</body></html>
